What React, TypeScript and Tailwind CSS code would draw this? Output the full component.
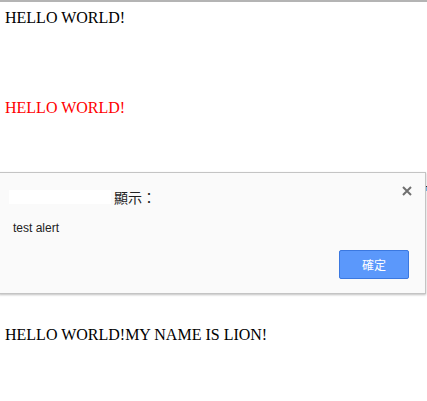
import React from 'react';

const serif = { fontFamily: '"Liberation Serif", "Times New Roman", serif' };

export default function App() {
  return (
    <div className="relative w-[427px] h-[401px] overflow-hidden bg-white border-t-2 border-[#b4b4b4]">
      {/* Page content behind the alert */}
      <div className="px-[5px] text-[16px] leading-[18px] text-black" style={serif}>
        <p className="mt-[7px]">HELLO WORLD!</p>
        <p className="mt-[72px] text-[#ff0000]">HELLO WORLD!</p>
        <p className="mt-[209px]">HELLO WORLD!MY NAME IS LION!</p>
      </div>

      {/* Something on the page peeking out behind the dialog */}
      <div className="absolute left-[425px] top-[171px] w-[4px] h-[20px] border-l border-[#666] flex items-end pb-[2px]">
        <div className="w-full h-[5px] bg-[#7fc3f0] border-t border-[#333]" />
      </div>

      {/* Alert dialog */}
      <div className="absolute left-[-1px] top-[170px] w-[427px] h-[122px] bg-[#fafafa] border border-[#c4c4c4] shadow-[0_1px_2px_rgba(0,0,0,0.25)] font-['Liberation_Sans','Noto_Sans_CJK_TC',sans-serif]">
        <div className="flex items-start justify-between pl-[9px] pr-[12px] pt-[15px]">
          <div className="flex items-center">
            <div className="w-[102px] h-[14px] bg-white" />
            <span className="ml-[3px] text-[14px] leading-[18px] text-[#222] font-['Noto_Sans_CJK_TC',sans-serif]">
              顯示：
            </span>
          </div>
          <button className="-mt-[3px] w-[12px] h-[12px] flex items-center justify-center">
            <svg width="10" height="10" viewBox="0 0 10 10">
              <path d="M1 1 L9 9 M9 1 L1 9" stroke="#6f6f6f" strokeWidth="2" />
            </svg>
          </button>
        </div>
        <p className="pl-[13px] mt-[14px] text-[12px] leading-[16px] text-[#222]">test alert</p>
        <div className="flex justify-end pr-[16px] mt-[14px]">
          <button className="w-[70px] h-[29px] bg-[#5b98fb] border border-[#3b78e0] rounded-[2px] text-white text-[12px] font-['Noto_Sans_CJK_TC',sans-serif]">
            確定
          </button>
        </div>
      </div>
    </div>
  );
}
